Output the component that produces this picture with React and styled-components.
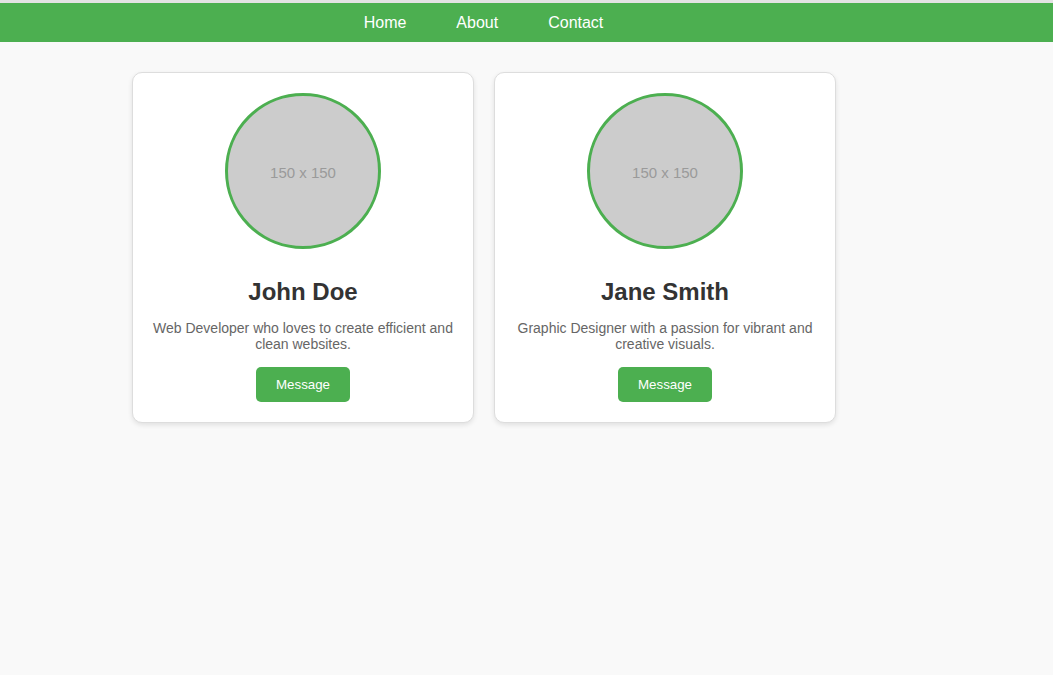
import styled, { createGlobalStyle } from 'styled-components';

const GlobalStyle = createGlobalStyle`
  body {
    margin: 0;
    background: #f9f9f9;
    font-family: "Liberation Sans", Arial, sans-serif;
    border-top: 3px solid #e3e3e3;
    min-height: 672px;
  }
`;

const NavBar = styled.nav`
  display: flex;
  justify-content: center;
  gap: 50px;
  height: 39px;
  align-items: center;
  padding-right: 86px;
  background: #4caf50;
`;

const NavLink = styled.a`
  color: #fff;
  font-size: 16px;
  text-decoration: none;
  cursor: pointer;
`;

const CardGrid = styled.div`
  display: flex;
  justify-content: center;
  gap: 20px;
  padding: 30px 85px 0 0;
`;

const Card = styled.div`
  width: 300px;
  padding: 20px;
  background: #fff;
  border: 1px solid #ddd;
  border-radius: 10px;
  box-shadow: 0 2px 5px rgba(0, 0, 0, 0.1);
  text-align: center;
`;

const Avatar = styled.div`
  box-sizing: border-box;
  width: 156px;
  height: 156px;
  padding-top: 2px;
  margin: 0 auto;
  border: 3px solid #4caf50;
  border-radius: 50%;
  background: #ccc;
  color: #9a9a9a;
  font-size: 15px;
  display: flex;
  align-items: center;
  justify-content: center;
`;

const Name = styled.h2`
  margin: 29px 0 14px;
  font-size: 24px;
  line-height: 28px;
  color: #333;
`;

const Bio = styled.p`
  margin: 0 0 15px;
  font-size: 14px;
  line-height: 16px;
  color: #666;
`;

const MessageButton = styled.button`
  padding: 10px 20px;
  border: none;
  border-radius: 5px;
  background: #4caf50;
  color: #fff;
  font-family: "Liberation Sans", Arial, sans-serif;
  font-size: 13.33px;
  line-height: 15px;
  cursor: pointer;
`;

const people = [
  { name: 'John Doe', bio: 'Web Developer who loves to create efficient and clean websites.' },
  { name: 'Jane Smith', bio: 'Graphic Designer with a passion for vibrant and creative visuals.' },
];

const App = () => {
  return (
    <>
      <GlobalStyle />
      <NavBar>
        <NavLink>Home</NavLink>
        <NavLink>About</NavLink>
        <NavLink>Contact</NavLink>
      </NavBar>
      <CardGrid>
        {people.map((p) => (
          <Card key={p.name}>
            <Avatar>150 x 150</Avatar>
            <Name>{p.name}</Name>
            <Bio>{p.bio}</Bio>
            <MessageButton>Message</MessageButton>
          </Card>
        ))}
      </CardGrid>
    </>
  );
};

export default App;
